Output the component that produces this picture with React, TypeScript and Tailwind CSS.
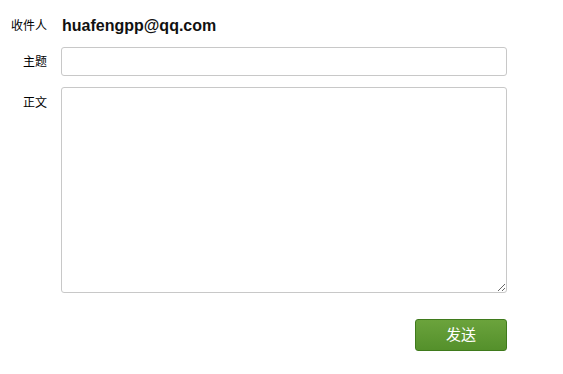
export default function App() {
  return (
    <div className="w-[563px] h-[374px] bg-white pt-[16px] font-['Liberation_Sans','Noto_Sans_CJK_SC',sans-serif] text-[12px] text-black">
      <div className="flex items-center h-[20px]">
        <div className="w-[47px] text-right">收件人</div>
        <div className="ml-[15px] text-[16px] font-bold text-[#111]">huafengpp@qq.com</div>
      </div>
      <div className="flex items-center mt-[11px]">
        <div className="w-[47px] text-right">主题</div>
        <input
          type="text"
          className="ml-[14px] w-[446px] h-[29px] border border-[#c8c8c8] rounded-[3px] px-2 outline-none"
        />
      </div>
      <div className="flex items-start mt-[11px]">
        <div className="w-[47px] text-right pt-[7px]">正文</div>
        <textarea className="ml-[14px] w-[446px] h-[206px] border border-[#c8c8c8] rounded-[3px] p-2 outline-none block" />
      </div>
      <div className="flex justify-end w-[507px] mt-[26px]">
        <button className="w-[92px] h-[32px] rounded-[3px] border border-[#3f7a1c] bg-gradient-to-b from-[#6ba33c] to-[#54902b] text-white text-[15px]">
          发送
        </button>
      </div>
    </div>
  );
}
